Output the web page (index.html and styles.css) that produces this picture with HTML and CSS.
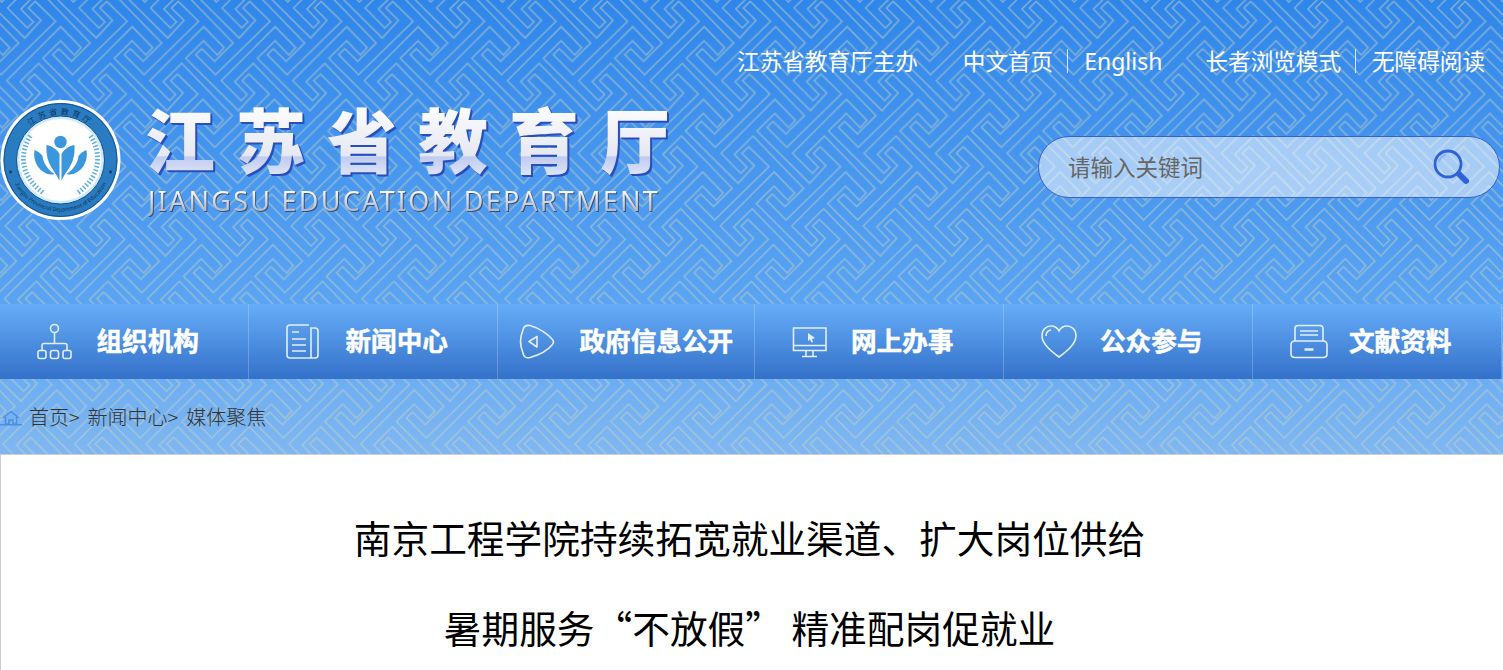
FILE: index.html
```html
<!DOCTYPE html>
<html lang="zh-CN">
<head>
<meta charset="utf-8">
<title>江苏省教育厅</title>
<link rel="stylesheet" href="styles.css">
</head>
<body>
<div class="page">
  <svg class="bg-pattern" width="1503" height="454" aria-hidden="true">
    <defs>
      <path id="fret" d="M10 175 63 122 105 165 125 143 63 80 -97 242 -37 302 -19 284 -57 245 -2 190 152 347 97 402 58 364 40 382 100 442 262 282 200 222 180 242 218 279 170 332Z"/>
      <pattern id="fretTile" patternUnits="userSpaceOnUse" x="0" y="0" width="214.500" height="218" patternTransform="translate(40 0) scale(.33333) skewX(-.6)">
        <g class="fret-lines">
          <use href="#fret" x="-214.500" y="0"/><use href="#fret" x="0" y="0"/><use href="#fret" x="214.500" y="0"/>
          <use href="#fret" x="-214.500" y="-218"/><use href="#fret" x="0" y="-218"/><use href="#fret" x="214.500" y="-218"/>
          <use href="#fret" x="-214.500" y="-436"/><use href="#fret" x="0" y="-436"/><use href="#fret" x="214.500" y="-436"/>
        </g>
      </pattern>
    </defs>
    <rect x="-10" width="1520" height="454" fill="url(#fretTile)"/>
  </svg>

  <header class="header">
    <div class="topbar">
      <span class="top-host">江苏省教育厅主办</span>
      <a class="top-link sep">中文首页</a>
      <a class="top-link lang-en">English</a>
      <a class="top-link sep">长者浏览模式</a>
      <a class="top-link last">无障碍阅读</a>
    </div>
    <div class="brand-row">
      <svg class="logo" width="121" height="120" viewBox="0 0 120 120" aria-hidden="true">
        <defs>
          <path id="ringTop" d="M14.500 60a45.500 45.500 0 0 1 91 0"/>
          <path id="ringBot" d="M8.500 60a51.500 51.500 0 0 0 103 0"/>
        </defs>
        <circle cx="60" cy="60" r="60" fill="#fff"/>
        <circle cx="60" cy="60" r="57" fill="#2a7cc2"/>
        <circle cx="60" cy="60" r="56.500" fill="none" stroke="#17558e" stroke-width="1"/>
        <circle cx="60" cy="60" r="44" fill="#cdeafa" stroke="#14508c" stroke-width="1"/>
        <circle cx="60" cy="60" r="41" fill="#fff"/>
        <text class="logo-cn"><textPath href="#ringTop" startOffset="50%" text-anchor="middle">江苏省教育厅</textPath></text>
        <text class="logo-en"><textPath href="#ringBot" startOffset="50%" text-anchor="middle">Jiangsu Provincial Department of Education</textPath></text>
        <circle cx="10" cy="72" r="1.400" fill="#10345c"/>
        <circle cx="110" cy="72" r="1.400" fill="#10345c"/>
        <path class="laurel" d="M30 36C19 52 19 76 43 93"/>
        <path class="laurel" d="M90 36C101 52 101 76 77 93"/>
        <circle cx="60" cy="42" r="6.200" fill="#3a97dc"/>
        <path class="petal" d="M46 45C52 46 57 50 59 54V81C55 70 45 66 46 45Z"/>
        <path class="petal" d="M74 45C68 46 63 50 61 54V81C65 70 75 66 74 45Z"/>
        <path class="petal" d="M34 50C37 51 40 53 42 56 43 64 48 70 54 74 48 76 41 72 37 66 34 61 33 56 34 50Z"/>
        <path class="petal" d="M86 50C83 51 80 53 78 56 77 64 72 70 66 74 72 76 79 72 83 66 86 61 87 56 86 50Z"/>
      </svg>
      <div class="brand-text">
        <div class="brand-cn">江苏省教育厅</div>
        <div class="brand-en">JIANGSU EDUCATION DEPARTMENT</div>
      </div>
      <div class="search">
        <span class="search-hint">请输入关键词</span>
        <svg class="search-icon" width="38" height="38" viewBox="0 0 38 38" aria-hidden="true">
          <circle cx="15" cy="15" r="13" fill="none" stroke="#2f62d8" stroke-width="2.800"/>
          <path d="M6 13A9 9 0 0 1 13 6" fill="none" stroke="#8db4ee" stroke-width="2"/>
          <path d="M26 25 33 32" stroke="#2f62d8" stroke-width="6" stroke-linecap="round"/>
        </svg>
      </div>
    </div>
  </header>

  <nav class="nav">
    <a class="nav-item">
      <svg class="nav-icon" viewBox="0 0 35 36" aria-hidden="true">
        <circle cx="17.500" cy="4.500" r="4"/>
        <path d="M17.500 9V19M5 26V21.500Q5 19.500 7 19.500H28Q30 19.500 30 21.500V26"/>
        <rect x="1" y="26.500" width="8" height="8" rx="2"/><rect x="13.500" y="26.500" width="8" height="8" rx="2"/><rect x="26" y="26.500" width="8" height="8" rx="2"/>
      </svg>
      <span class="nav-text">组织机构</span>
    </a>
    <a class="nav-item">
      <svg class="nav-icon" viewBox="0 0 35 36" aria-hidden="true">
        <path d="M23 1H4Q1 1 1 4V31Q1 34 4 34H29Q32 34 32 31V7Q32 4 29 4H25V34"/>
        <path d="M6 8H13M6 15H20M6 21H20M6 27H20"/>
      </svg>
      <span class="nav-text">新闻中心</span>
    </a>
    <a class="nav-item nav-item-wide">
      <svg class="nav-icon" viewBox="0 0 35 36" aria-hidden="true">
        <path d="M3 6Q4 .5 10 1.500C19 4 28 10 32 15Q35 18 32 21C28 26 19 31 10 33.500Q4 35 3 29C0 22 0 13 3 6Z"/>
        <path d="M9 17.500 17 12.500V23Z" stroke-linejoin="round"/>
      </svg>
      <span class="nav-text">政府信息公开</span>
    </a>
    <a class="nav-item">
      <svg class="nav-icon" viewBox="0 0 35 36" aria-hidden="true">
        <path d="M1.500 4H34V26.500H1.500ZM1.500 21.500H34M14 27V32M21 27V32M10 32.500H25"/>
        <path class="nav-icon-fill" d="M16 9 23 14 20 15 21 18 19.500 18.500 18 15.500 16 17Z"/>
      </svg>
      <span class="nav-text">网上办事</span>
    </a>
    <a class="nav-item">
      <svg class="nav-icon" viewBox="0 0 35 36" aria-hidden="true">
        <path d="M18 33C10 27 1 20 1 11.500 1 5.500 5.500 2 10 2 13.500 2 16.500 4 18 7 19.500 4 22.500 2 26 2 30.500 2 35 5.500 35 11.500 35 20 26 27 18 33Z"/>
        <path d="M5 12C5 9 7 6.500 10 6"/>
      </svg>
      <span class="nav-text">公众参与</span>
    </a>
    <a class="nav-item">
      <svg class="nav-icon" viewBox="0 0 35 36" aria-hidden="true">
        <path d="M5 17V5Q5 1.500 8 1.500H30Q33 1.500 33 5V17"/>
        <path d="M10 7H28M10 11H28"/>
        <path d="M1 21Q1 17 5 17H33Q37 17 37 21V30Q37 33.500 33 33.500H5Q1 33.500 1 30Z"/>
        <path d="M14.500 25.500H23.500" stroke-width="2.500"/>
      </svg>
      <span class="nav-text">文献资料</span>
    </a>
  </nav>

  <div class="crumbs">
    <svg class="home-icon" width="22" height="16" viewBox="0 0 22 16" aria-hidden="true">
      <path d="M3 8 11 1.500 19 8M5.500 7V14H9V10H13V14H16.500V7M0 14.800H22"/>
    </svg>
    <span class="crumb-text">首页&gt; 新闻中心&gt; 媒体聚焦</span>
  </div>

  <main class="panel">
    <h1 class="article-title">南京工程学院持续拓宽就业渠道、扩大岗位供给</h1>
    <h1 class="article-title">暑期服务“不放假” 精准配岗促就业</h1>
  </main>
</div>
</body>
</html>
```
FILE: styles.css
```css
* { box-sizing: border-box; }
html, body { margin: 0; padding: 0; height: 670px; overflow: hidden; background: #fff; }
body { font-family: "Noto Sans CJK SC", "Noto Sans", sans-serif; }

.page {
  position: relative;
  width: 1503px;
  height: 670px;
  display: flex;
  flex-direction: column;
  background: linear-gradient(180deg, #2f86ea 0, #5aa4f3 304px, #7fb7f2 454px, #fff 454px);
  overflow: hidden;
}
.bg-pattern { position: absolute; left: 0; top: 0; filter: blur(.45px); }
.fret-lines { fill: none; stroke: rgba(200, 212, 190, .48); stroke-width: 5; stroke-linejoin: miter; }

.header { position: relative; height: 304px; flex: none; padding-top: 43px; }
.topbar {
  display: flex;
  align-items: center;
  justify-content: flex-end;
  height: 36px;
  padding-right: 18px;
  color: #fff;
  font-size: 22.600px;
  line-height: 36px;
}
.top-host { margin-right: 45px; }
.top-link { position: relative; }
.sep { padding-right: 14px; border-right: 1px solid rgba(255, 255, 255, .8); height: 24px; line-height: 24px; margin-right: 16px; }
.lang-en { margin-right: 43px; font-family: "Noto Sans", sans-serif; font-size: 23px; }
.brand-row { display: flex; align-items: flex-start; margin-top: 21px; }
.logo { flex: none; }
.logo-cn { font-size: 8px; fill: #10345c; letter-spacing: 3px; }
.logo-en { font-size: 5.500px; fill: #10345c; }
.laurel { fill: none; stroke: #5cb0e0; stroke-width: 5; stroke-dasharray: 1.500 2; }
.petal { fill: #3a97dc; }

.brand-text { margin-left: 24px; width: 560px; flex: none; }
.brand-cn {
  height: 76px;
  font-size: 70px;
  line-height: 76px;
  font-weight: 900;
  letter-spacing: 21px;
  white-space: nowrap;
  color: transparent;
  background: linear-gradient(180deg, #fff 0, #e6e8f2 73%, #bfcbf0 75%, #dfe6f8 100%);
  -webkit-background-clip: text;
  background-clip: text;
  filter: drop-shadow(1px 1px 0 #2a4dbd) drop-shadow(1px 1px 0 #2a4dbd);
}
.brand-en {
  margin-top: 7px;
  margin-left: 3px;
  height: 36px;
  font-family: "Noto Sans", sans-serif;
  font-size: 27px;
  line-height: 36px;
  letter-spacing: 2.250px;
  white-space: nowrap;
  color: transparent;
  background: linear-gradient(180deg, #f6f6f8 25%, #aab4ca 80%);
  -webkit-background-clip: text;
  background-clip: text;
  filter: drop-shadow(1.500px 1px 0 #3d4f6c);
}
.search {
  display: flex;
  align-items: center;
  justify-content: space-between;
  margin-left: auto;
  margin-right: 3px;
  margin-top: 36px;
  width: 462px;
  height: 62px;
  padding: 0 28px 0 29px;
  border: 1px solid #3a5fd0;
  border-radius: 31px;
  background: rgba(255, 255, 255, .52);
}
.search-hint { color: #666; font-size: 22.500px; line-height: 60px; margin-top: -2px; }
.search-icon { flex: none; margin-top: 2px; }

.nav {
  position: relative;
  flex: none;
  display: flex;
  width: 1502px;
  height: 75px;
  background: linear-gradient(180deg, #66adf8 0, #3471c9 100%);
}
.nav-item {
  display: flex;
  align-items: center;
  flex: none;
  width: 249px;
  padding-left: 37px;
  border-right: 1px solid rgba(255, 255, 255, .22);
  color: #fff;
}
.nav-item-wide { width: 256.500px; padding-left: 22px; }
.nav-icon {
  flex: none;
  width: 35px;
  height: 36px;
  margin-right: 24.500px;
  overflow: visible;
  fill: none;
  stroke: #e3eefb;
  stroke-width: 1.600;
}
.nav-icon-fill { fill: #e3eefb; stroke: none; }
.nav-text {
  font-size: 25.600px;
  font-weight: 700;
  line-height: 30px;
  margin-top: -3px;
  white-space: nowrap;
  -webkit-text-stroke: .5px #fff;
}

.crumbs {
  position: relative;
  flex: none;
  display: flex;
  align-items: center;
  height: 75px;
}
.home-icon { flex: none; margin-right: 7px; fill: none; stroke: #4a8ee8; stroke-width: 1.600; margin-top: 2px; }
.crumb-text { font-size: 20px; font-weight: 300; color: #333; white-space: pre; word-spacing: 3.500px; line-height: 30px; }

.panel {
  position: relative;
  flex: 1;
  padding: 37px 5px 0 0;
  background: #fff;
  border: 1px solid #ccc;
  border-right: 0;
  border-bottom: 0;
}
.article-title {
  margin: 0;
  font-size: 37.700px;
  line-height: 90px;
  font-weight: 400;
  color: #000;
  text-align: center;
  white-space: nowrap;
}
```
